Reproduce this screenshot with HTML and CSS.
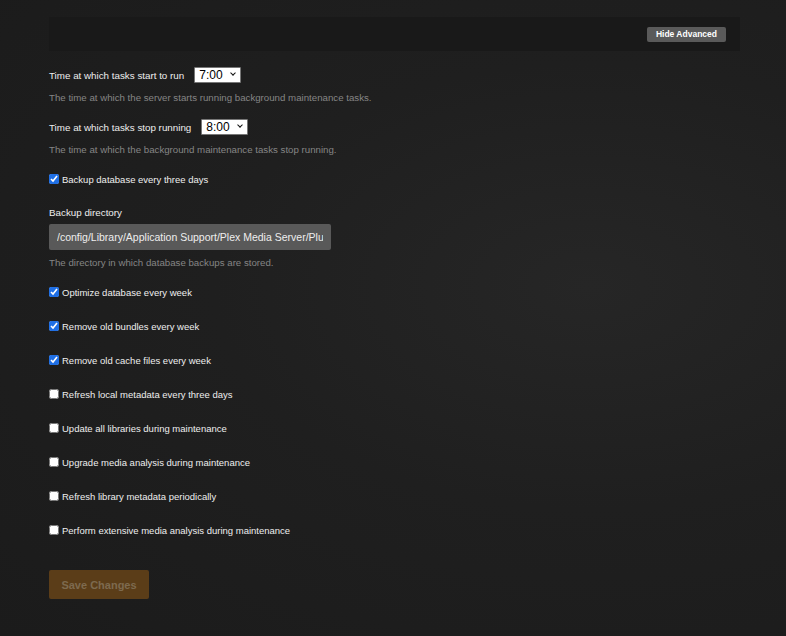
FILE: index.html
```html
<!DOCTYPE html>
<html>
<head>
    <title>Scheduled Tasks</title>
    <link rel="stylesheet" href="styles.css">
</head>
<body>
    <div class="page">
        <div class="toolbar">
            <button class="btn-advanced">Hide Advanced</button>
        </div>

        <form class="settings">
            <div class="field">
                <label class="inline-label">Time at which tasks start to run
                    <span class="select-wrap">
                        <select class="time-select">
                            <option>7:00</option>
                        </select>
                    </span>
                </label>
                <p class="help">The time at which the server starts running background maintenance tasks.</p>
            </div>

            <div class="field">
                <label class="inline-label">Time at which tasks stop running
                    <span class="select-wrap">
                        <select class="time-select">
                            <option>8:00</option>
                        </select>
                    </span>
                </label>
                <p class="help">The time at which the background maintenance tasks stop running.</p>
            </div>

            <div class="check"><label><input type="checkbox" checked> Backup database every three days</label></div>

            <div class="field">
                <div class="block-label">Backup directory</div>
                <input class="text-input" type="text" value="/config/Library/Application Support/Plex Media Server/Plug-ins">
                <p class="help help-tight">The directory in which database backups are stored.</p>
            </div>

            <div class="check"><label><input type="checkbox" checked> Optimize database every week</label></div>
            <div class="check"><label><input type="checkbox" checked> Remove old bundles every week</label></div>
            <div class="check"><label><input type="checkbox" checked> Remove old cache files every week</label></div>
            <div class="check"><label><input type="checkbox"> Refresh local metadata every three days</label></div>
            <div class="check"><label><input type="checkbox"> Update all libraries during maintenance</label></div>
            <div class="check"><label><input type="checkbox"> Upgrade media analysis during maintenance</label></div>
            <div class="check"><label><input type="checkbox"> Refresh library metadata periodically</label></div>
            <div class="check"><label><input type="checkbox"> Perform extensive media analysis during maintenance</label></div>

            <button class="btn-save" type="button" disabled>Save Changes</button>
        </form>
    </div>
</body>
</html>
```

FILE: styles.css
```css
body { margin: 0; font-family: "Liberation Sans", Arial, sans-serif; color: #eee; background: radial-gradient(ellipse at 75% 45%, #262626 0%, #1f1f1f 45%, #1b1b1b 100%); min-height: 636px; }
.page { width: 691px; padding: 17px 0 0 49px; }
.toolbar { height: 34px; background: #191919; display: flex; align-items: center; justify-content: flex-end; padding-right: 14px; }
.btn-advanced { background: #5a5a5a; color: #fff; border: 0; border-radius: 2px; font: bold 8.5px "Liberation Sans", Arial, sans-serif; height: 15px; padding: 0 9px; }
.settings { padding-top: 16px; }
.field { margin-bottom: 16px; }
.inline-label { font-size: 9.8px; display: flex; align-items: center; gap: 10px; height: 16px; }
.select-wrap { position: relative; display: inline-block; }
.select-wrap::after { content: ""; position: absolute; right: 6px; top: 4px; width: 3px; height: 3px; border: solid #111; border-width: 0 1.6px 1.6px 0; transform: rotate(45deg); pointer-events: none; }
.time-select { appearance: none; -webkit-appearance: none; display: block; font: 12px "Liberation Sans", Arial, sans-serif; width: 47px; height: 16px; box-sizing: border-box; background: #fff; color: #000; border: 1px solid #777; border-radius: 1px; padding: 0 0 0 4px; line-height: 14px; }
.help { color: #858585; font-size: 9.7px; margin: 9px 0 0; }
.help-tight { margin-top: 7px; }
.check { font-size: 9.5px; height: 31px; padding-top: 3px; }
.check label { display: flex; align-items: flex-start; gap: 2px; }
.check input { margin: 0 1px 0 0; width: 10px; height: 10px; accent-color: #1f6fe5; }
.block-label { font-size: 9.8px; margin: 2px 0 6px; }
.text-input { display: block; width: 282px; height: 26px; box-sizing: border-box; background: #595959; border: 0; border-radius: 2px; color: #eee; font: 10.5px "Liberation Sans", Arial, sans-serif; padding: 0 8px; }
.btn-save { margin-top: 14px; width: 100px; height: 29px; background: #5b3d18; color: #7d6a4f; border: 0; border-radius: 2px; font: bold 11px "Liberation Sans", Arial, sans-serif; }
```
